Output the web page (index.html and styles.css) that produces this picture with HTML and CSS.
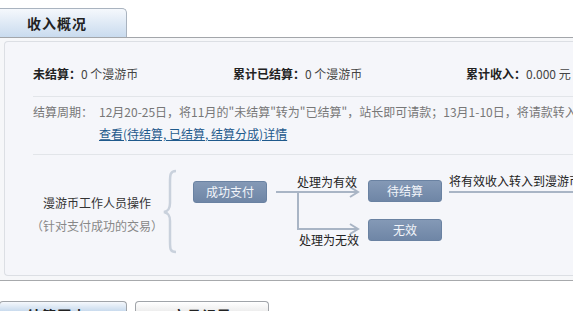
FILE: index.html
```html
<!DOCTYPE html>
<html lang="zh">
<head>
<meta charset="utf-8">
<title>收入概况</title>
<link rel="stylesheet" href="styles.css">
</head>
<body>
<div class="tabbar">
  <div class="tab tab-active">收入概况</div>
</div>
<div class="section">
  <div class="panel">
    <div class="summary">
      <div class="stat stat-1"><b>未结算：</b>0 个漫游币</div>
      <div class="stat stat-2"><b>累计已结算：</b>0 个漫游币</div>
      <div class="stat stat-3"><b>累计收入：</b>0.000 元</div>
    </div>
    <div class="period">
      <div class="period-label">结算周期：</div>
      <div class="period-body">
        <div class="period-text">12月20-25日，将11月的"未结算"转为"已结算"，站长即可请款；13月1-10日，将请款转入到漫游币账户</div>
        <a class="period-link" href="#">查看(待结算, 已结算, 结算分成)详情</a>
      </div>
    </div>
    <div class="flow">
      <div class="actor">
        <div class="actor-name">漫游币工作人员操作</div>
        <div class="actor-note">（针对支付成功的交易）</div>
      </div>
      <svg class="lines" width="600" height="119" viewBox="0 0 600 119">
        <path d="M171 16 C165 16 165 20 165 28 L165 48 C165 54 163 56 159 57 C163 58 165 60 165 66 L165 86 C165 94 165 97 171 97" fill="none" stroke="#c9d1dc" stroke-width="2.5"/>
        <g stroke="#a9b5c5" stroke-width="2" fill="none">
          <path d="M271 37 H352"/>
          <path d="M293 37 V74 H352"/>
          <path d="M345 32 L353 37 L345 42"/>
          <path d="M345 69 L353 74 L345 79"/>
          <path d="M444 37 H600"/>
        </g>
      </svg>
      <div class="node node-pay">成功支付</div>
      <div class="label label-valid">处理为有效</div>
      <div class="label label-invalid">处理为无效</div>
      <div class="node node-pending">待结算</div>
      <div class="node node-void">无效</div>
      <div class="label label-result">将有效收入转入到漫游币账户</div>
    </div>
  </div>
</div>
<div class="tabbar tabbar-bottom">
  <div class="tab tab-active tab-b1">结算历史</div>
  <div class="tab tab-plain">交易记录</div>
</div>
</body>
</html>
```
FILE: styles.css
```css
* { box-sizing: border-box; }
html, body { margin: 0; padding: 0; }
body {
  width: 573px;
  height: 311px;
  overflow: hidden;
  background: #fff;
  font-family: "Noto Sans CJK SC", "Noto Sans", sans-serif;
  font-size: 12px;
  color: #333;
}
.tabbar {
  height: 38px;
  display: flex;
  align-items: flex-end;
  border-bottom: 1px solid #a3a6aa;
  padding-left: 0;
  margin-left: -1px;
}
.tab {
  height: 29px;
  width: 128px;
  border: 1px solid #a9b3bf;
  border-bottom: none;
  border-radius: 0 5px 0 0;
  font-size: 14px;
  font-weight: bold;
  color: #222;
  text-align: center;
  padding-top: 4px;
  padding-right: 12px;
  letter-spacing: 1px;
}
.tab-active {
  background: linear-gradient(#f5f8fc, #c9dbee);
}
.section {
  background: #f6f7f9;
  padding: 3px 0 4px 4px;
  border-bottom: 1px solid #a7a9ac;
  height: 243px;
}
.panel {
  background: #f5f6fa;
  border: 1px solid #dcdfe4;
  border-right: none;
  border-radius: 4px 0 0 4px;
  height: 235px;
  width: 600px;
}
.summary {
  display: flex;
  align-items: center;
  height: 55px;
  margin-left: 28px;
  border-bottom: 1px solid #e2e5e9;
  padding-top: 8px;
}
.stat { white-space: nowrap; color: #444; }
.stat b { color: #222; }
.stat-1 { width: 200px; }
.stat-2 { width: 233px; }
.period {
  display: flex;
  margin-left: 28px;
  padding: 4px 0 9px;
  border-bottom: 1px solid #e2e5e9;
  line-height: 22px;
  color: #777;
}
.period-label { width: 66px; flex: none; }
.period-body { white-space: nowrap; }
.period-text { color: #777; }
.period-link {
  display: block;
  color: #1f5a8c;
  text-decoration: underline;
}
.flow {
  position: relative;
  height: 119px;
}
.lines { position: absolute; left: 0; top: 0; }
.actor {
  position: absolute;
  left: 2px;
  top: 36px;
  width: 180px;
  text-align: center;
  line-height: 23px;
}
.actor-name { color: #333; }
.actor-note { color: #888; }
.node {
  position: absolute;
  height: 22px;
  width: 74px;
  border: 1px solid #6a82a2;
  border-radius: 3px;
  background: linear-gradient(#8499b6, #6f86a6);
  color: #f2f5fa;
  text-align: center;
  line-height: 20px;
  font-size: 12px;
}
.node-pay { left: 188px; top: 26px; }
.node-pending { left: 363px; top: 25px; }
.node-void { left: 363px; top: 64px; }
.label {
  position: absolute;
  color: #222;
  line-height: 16px;
  white-space: nowrap;
}
.label-valid { left: 292px; top: 19px; }
.label-invalid { left: 294px; top: 77px; }
.label-result { left: 444px; top: 18px; }
.tabbar-bottom {
  border-bottom: none;
  height: 30px;
  align-items: flex-end;
  gap: 8px;
}
.tabbar-bottom .tab {
  height: 10px;
  border-radius: 4px 4px 0 0;
  border-color: #a0a4a9;
  padding-top: 4px;
  overflow: hidden;
  line-height: 18px;
}
.tab-b1 { width: 128px; }
.tab-plain {
  width: 134px;
  background: linear-gradient(#ffffff, #eeeeee);
  padding-right: 0;
}
```
